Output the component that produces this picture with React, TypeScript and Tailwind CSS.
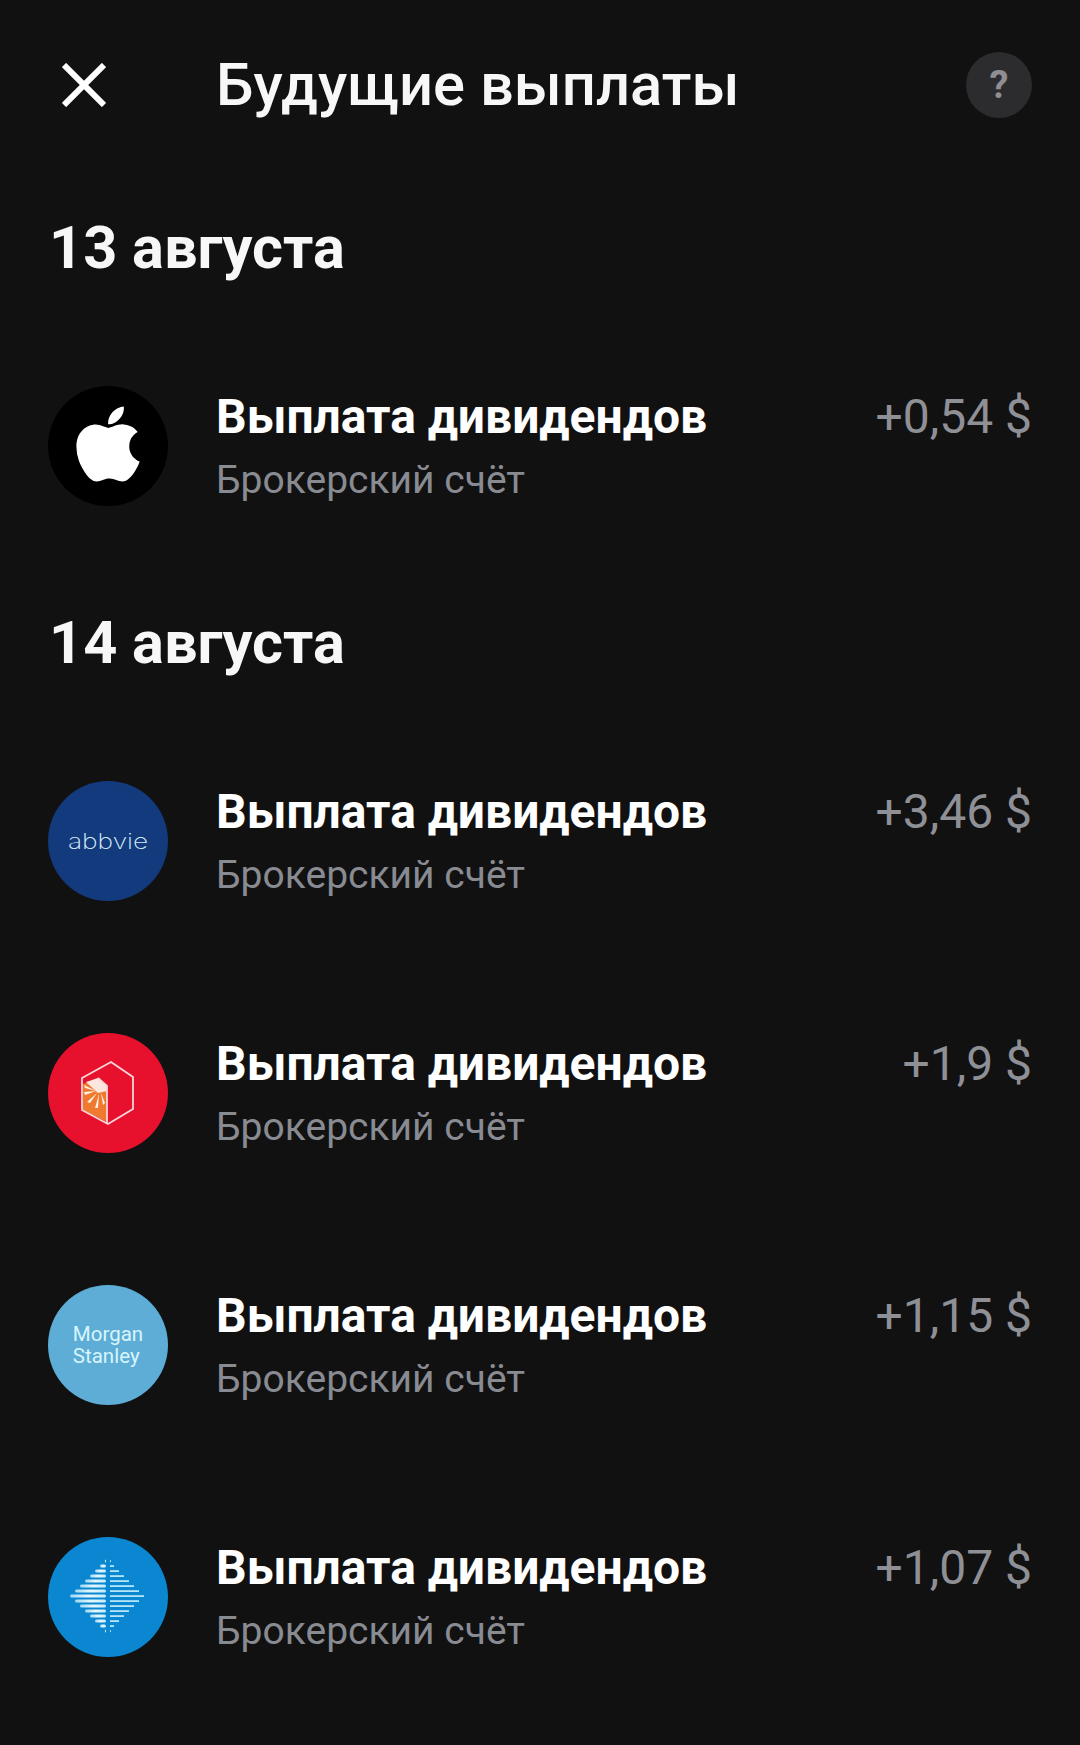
import { FaApple } from 'react-icons/fa'
import { ReactNode } from 'react'

function Row({ logo, amount }: { logo: ReactNode; amount: string }) {
  return (
    <div className="flex h-[120px] items-center pl-12 pr-12">
      {logo}
      <div className="ml-12 flex-1 pt-[2px]">
        <div className="text-[48px] font-bold leading-[52px] text-white">Выплата дивидендов</div>
        <div className="mt-[14px] text-[39px] leading-[46px] text-[#888b91]">Брокерский счёт</div>
      </div>
      <div className="mb-[58px] text-[48px] leading-[52px] text-[#8f9096]">{amount}</div>
    </div>
  )
}

function Circle({ className, children }: { className: string; children: ReactNode }) {
  return (
    <div className={`flex h-[120px] w-[120px] shrink-0 items-center justify-center rounded-full ${className}`}>
      {children}
    </div>
  )
}

function CloseIcon() {
  return (
    <svg width="44" height="44" viewBox="0 0 44 44" fill="none" stroke="#fff" strokeWidth="6">
      <path d="M2 2 L42 42 M42 2 L2 42" />
    </svg>
  )
}

function MagnaLogo() {
  const rays = [
    'M66 74 L54 68 L55 71 Z',
    'M66 74 L54 75 L55 78 Z',
    'M67 76 L57 85 L60 86 Z',
    'M69 77 L65 91 L68 91 Z',
    'M71 76 L73 88 L75 86 Z',
  ]
  return (
    <svg width="58" height="68" viewBox="49 42 58 68" fill="none">
      <path d="M53 67 L68 62 L77 69 L77 105 L53 93 Z" fill="#ef7a2f" />
      <path d="M56 65 L68 61 L77 69 L77 74 L68 76 Z" fill="#fbe7de" />
      {rays.map(d => (
        <path key={d} d={d} fill="#fff1e4" />
      ))}
      <path d="M81 45 L103 60 L103 92 L78 107 L52 93 L52 61 Z" stroke="#f8d6d9" strokeWidth="1.8" />
      <path d="M68 61 L77 69 L77 106" stroke="#f8d6d9" strokeWidth="1.8" />
    </svg>
  )
}

function DiamondLogo() {
  const lines = Array.from({ length: 15 }).map((_, i) => {
    const y = 2 + i * 5
    const half = 37 - Math.abs(y - 37)
    return { y, half }
  })
  return (
    <svg width="76" height="76" viewBox="0 0 76 76">
      <defs>
        <linearGradient id="diamond-left" x1="0" x2="1" y1="0" y2="0">
          <stop offset="0" stopColor="#9bd8f3" />
          <stop offset="0.5" stopColor="#e6f8fd" />
          <stop offset="1" stopColor="#c4ecfa" />
        </linearGradient>
      </defs>
      {lines.map(l => (
        <g key={l.y}>
          <rect x={37 - l.half} y={l.y - 1.4} width={Math.max(l.half - 1, 1)} height="3" rx="1.5" fill="url(#diamond-left)" />
          <rect x={40} y={l.y - 0.8} width={Math.max(l.half - 3, 1)} height="1.8" fill="#b5e6f8" />
        </g>
      ))}
    </svg>
  )
}

export default function App() {
  return (
    <div className="h-[1745px] w-[1080px] overflow-hidden bg-[#111112] font-['Roboto',sans-serif]">
      <div className="flex items-center pl-[62px] pr-12 pt-[52px]">
        <CloseIcon />
        <div className="ml-[110px] flex-1 text-[59.7px] font-medium leading-[66px] text-[#f7f7f8]">Будущие выплаты</div>
        <div className="flex h-[66px] w-[66px] items-center justify-center rounded-full bg-[#2c2c2e] text-[38px] font-bold text-[#8e8e93]">?</div>
      </div>

      <div className="mt-[95px] pl-[49px] text-[59.5px] font-bold leading-[70px] text-[#f7f7f8]">13 августа</div>
      <div className="mt-[103px]">
        <Row
          amount="+0,54 $"
          logo={
            <Circle className="bg-black">
              <FaApple size={86} color="#fff" className="mb-1" />
            </Circle>
          }
        />
      </div>

      <div className="mt-[102px] pl-[49px] text-[59.5px] font-bold leading-[70px] text-[#f7f7f8]">14 августа</div>
      <div className="mt-[103px] flex flex-col gap-[132px]">
        <Row
          amount="+3,46 $"
          logo={
            <Circle className="bg-[#123a7c]">
              <span className="origin-center scale-x-[1.25] font-['Inter',sans-serif] text-[21px] font-extralight leading-none text-[#d9ecf8]">abbvie</span>
            </Circle>
          }
        />
        <Row
          amount="+1,9 $"
          logo={
            <Circle className="bg-[#e8112d]">
              <MagnaLogo />
            </Circle>
          }
        />
        <Row
          amount="+1,15 $"
          logo={
            <Circle className="bg-[#5dadd6]">
              <div className="text-[20.5px] leading-[22px] text-[#d8f5fc]">
                Morgan
                <br />
                Stanley
              </div>
            </Circle>
          }
        />
        <Row
          amount="+1,07 $"
          logo={
            <Circle className="bg-[#0a87d0]">
              <DiamondLogo />
            </Circle>
          }
        />
      </div>
    </div>
  )
}
